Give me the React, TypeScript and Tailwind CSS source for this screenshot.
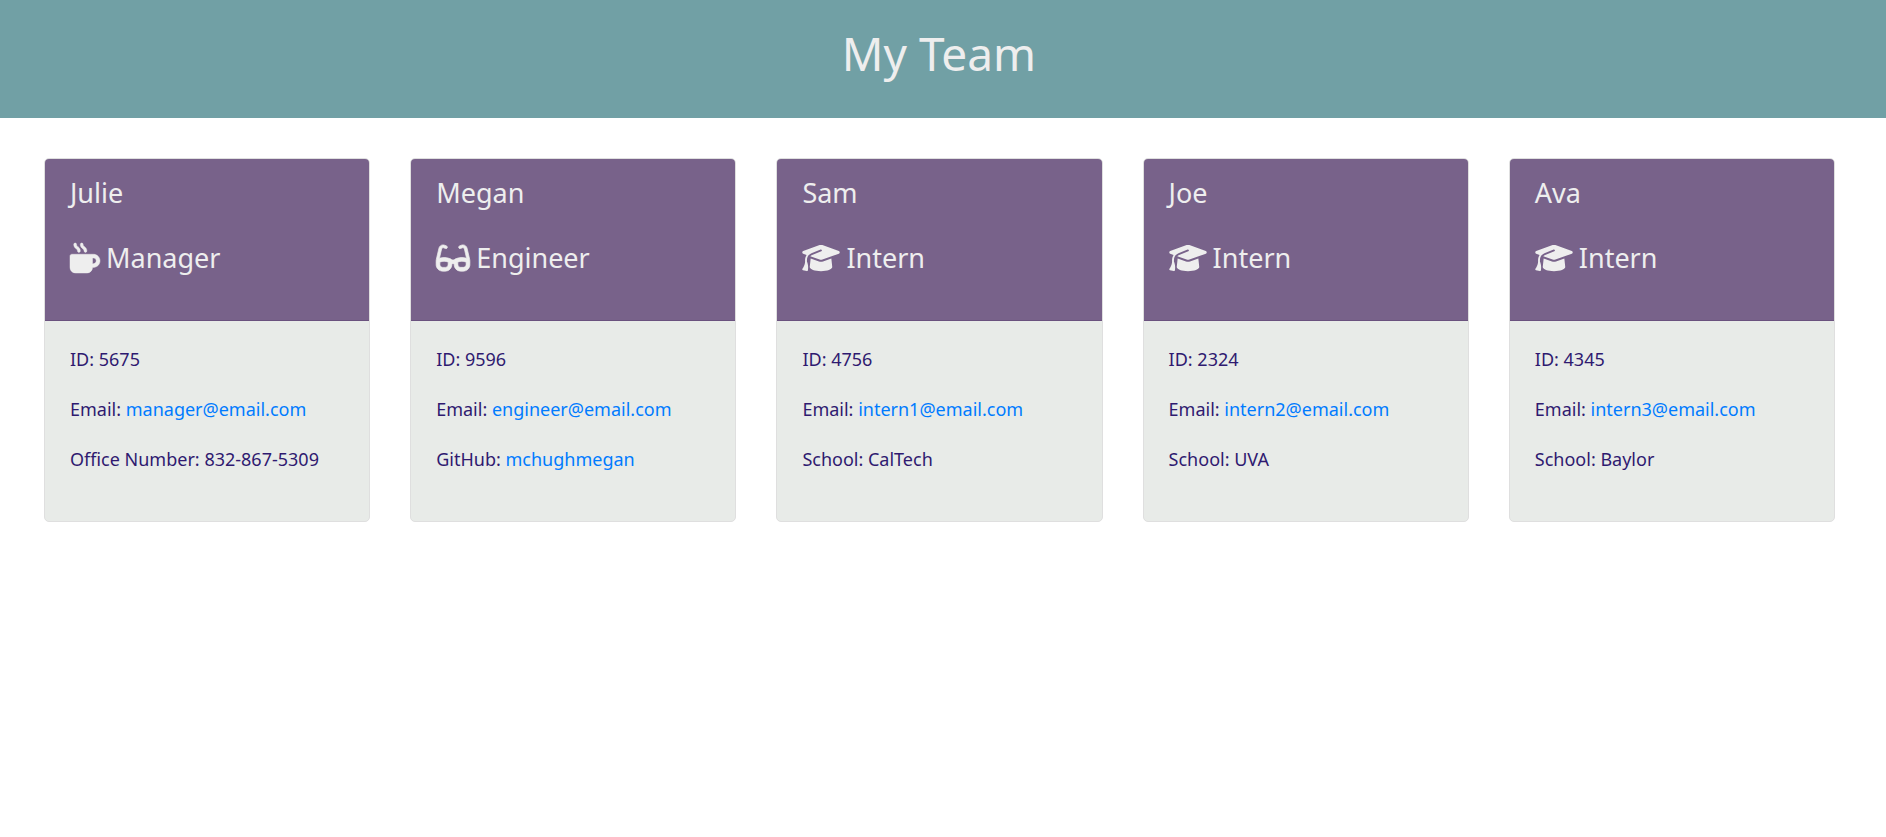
import { FaMugHot, FaGlasses, FaGraduationCap } from "react-icons/fa6";

type Role = "Manager" | "Engineer" | "Intern";

type Member = {
  name: string;
  role: Role;
  id: number;
  email: string;
  label: string;
  value: string;
  href?: string;
};

const team: Member[] = [
  { name: "Julie", role: "Manager", id: 5675, email: "manager@email.com", label: "Office Number", value: "832-867-5309" },
  { name: "Megan", role: "Engineer", id: 9596, email: "engineer@email.com", label: "GitHub", value: "mchughmegan", href: "https://github.com/mchughmegan" },
  { name: "Sam", role: "Intern", id: 4756, email: "intern1@email.com", label: "School", value: "CalTech" },
  { name: "Joe", role: "Intern", id: 2324, email: "intern2@email.com", label: "School", value: "UVA" },
  { name: "Ava", role: "Intern", id: 4345, email: "intern3@email.com", label: "School", value: "Baylor" },
];

const icons = {
  Manager: <FaMugHot className="h-[30px] w-[30px] overflow-visible stroke-[8px]" />,
  Engineer: <FaGlasses className="h-[30px] w-[34px] overflow-visible stroke-[12px]" />,
  Intern: <FaGraduationCap className="h-[30px] w-[38px]" />,
};

function Card({ member }: { member: Member }) {
  return (
    <article className="overflow-hidden rounded-[5px] border border-[#dfdfdf] bg-[#e8ebe8]">
      <header className="flex flex-col gap-[29px] border-b border-[#6a527e] bg-[#78628a] px-[25px] pt-4 pb-11 text-[27px] leading-9 text-[#eeeeee]">
        <h2>{member.name}</h2>
        <h3 className="flex items-center gap-[6px]">
          {icons[member.role]}
          {member.role}
        </h3>
      </header>
      <div className="flex flex-col gap-5 px-[25px] pt-[23px] pb-[47px] text-[18px] leading-[30px] text-[#2f1a70]">
        <p>ID: {member.id}</p>
        <p>
          Email: <a href={`mailto:${member.email}`} className="text-[#007bff] hover:underline">{member.email}</a>
        </p>
        <p>
          {member.label}:{" "}
          {member.href ? <a href={member.href} className="text-[#007bff] hover:underline">{member.value}</a> : member.value}
        </p>
      </div>
    </article>
  );
}

export default function App() {
  return (
    <div className="font-['Noto_Sans',sans-serif]">
      <header className="bg-[#71a0a5] pt-[23px] pr-7 pb-[35px] pl-5 text-center">
        <h1 className="text-[46px] leading-[60px] text-[#eeeeee]">My Team</h1>
      </header>
      <main className="grid grid-cols-5 gap-10 py-10 pr-[51px] pl-11">
        {team.map((member) => (
          <Card key={member.id} member={member} />
        ))}
      </main>
    </div>
  );
}
